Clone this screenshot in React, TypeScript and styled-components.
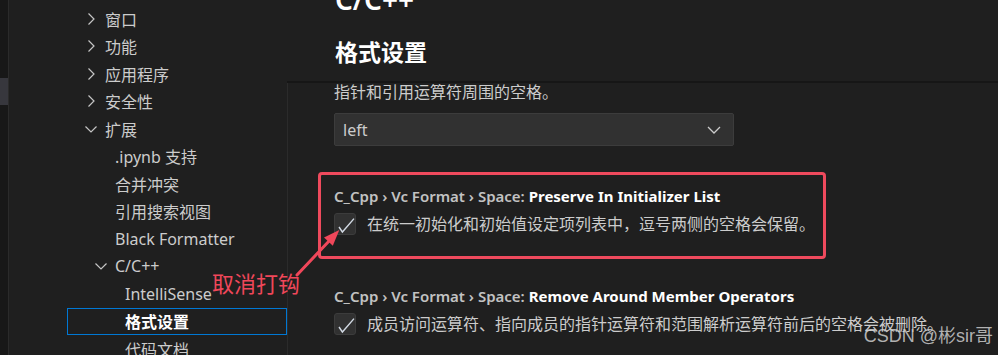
import React from "react";
import styled, { createGlobalStyle } from "styled-components";

const GlobalStyle = createGlobalStyle`
  body {
    margin: 0;
    background: #1f1f1f;
    overflow: hidden;
  }
`;

const UI_FONT = `"Noto Sans", "Noto Sans CJK SC", sans-serif`;

const Frame = styled.div`
  position: relative;
  display: flex;
  width: 998px;
  height: 355px;
  overflow: hidden;
  background: #1f1f1f;
  font-family: ${UI_FONT};
  color: #cccccc;
`;

const ActivityStrip = styled.div`
  width: 8px;
  flex-shrink: 0;
  padding-top: 78px;
  background: #181818;
  border-right: 1px solid #2b2b2b;
`;

const ActiveMark = styled.div`
  height: 27px;
  background: #37373d;
`;

const Sidebar = styled.nav`
  width: 278px;
  flex-shrink: 0;
  padding: 5px 0 0 58px;
  box-sizing: border-box;
`;

const TocRow = styled.div<{ $level: number; $selected?: boolean }>`
  display: flex;
  align-items: center;
  height: 27.5px;
  box-sizing: border-box;
  padding-left: ${(p) => 15 + (p.$level - 1) * 10}px;
  border: 1px solid ${(p) => (p.$selected ? "#0078d4" : "transparent")};
  font-size: 16px;
  white-space: nowrap;
  color: ${(p) => (p.$selected ? "#ffffff" : "#cccccc")};
  font-weight: ${(p) => (p.$selected ? 700 : 400)};
`;

const Twistie = styled.span`
  display: flex;
  align-items: center;
  justify-content: center;
  width: 16px;
  height: 16px;
  margin-right: 6px;
  flex-shrink: 0;
`;

const Editor = styled.main`
  flex: 1;
  display: flex;
  flex-direction: column;
  min-width: 0;
`;

const StickyHeader = styled.header`
  display: flex;
  flex-direction: column;
  align-items: flex-start;
  height: 81px;
  flex-shrink: 0;
  padding-left: 48px;
  box-sizing: border-box;
  overflow: hidden;
`;

const Crumb = styled.div`
  margin-top: -15px;
  font-size: 28px;
  line-height: 28px;
  font-weight: 600;
  color: #ffffff;
`;

const SectionTitle = styled.h2`
  margin: 24px 0 0;
  font-size: 23px;
  line-height: 30px;
  font-weight: 700;
  color: #ffffff;
`;

const HeaderShadow = styled.div`
  height: 2px;
  flex-shrink: 0;
  background: #161616;
`;

const SettingsList = styled.section`
  flex: 1;
  padding-left: 46px;
  border-left: 1px solid #2b2b2b;
`;

const Description = styled.div`
  font-size: 16px;
  line-height: 18px;
  color: #cccccc;
`;

const Select = styled.div`
  display: flex;
  align-items: center;
  justify-content: space-between;
  width: 400px;
  height: 33px;
  margin-top: 12px;
  padding: 0 11px 0 8px;
  box-sizing: border-box;
  background: #313131;
  border: 1px solid #3c3c3c;
  border-radius: 2px;
  font-size: 16px;
  color: #cccccc;
`;

const SettingItem = styled.div<{ $marked?: boolean; $top: number }>`
  position: relative;
  margin-top: ${(p) => p.$top}px;
  padding: 15px 0 35px;

  ${(p) =>
    p.$marked &&
    `
    &::after {
      content: "";
      position: absolute;
      top: 2px;
      left: -16px;
      width: 508px;
      height: 87px;
      box-sizing: border-box;
      border: 3px solid #ef4a5d;
      border-radius: 4px;
      pointer-events: none;
    }
  `}
`;

const SettingTitle = styled.div`
  font-size: 15px;
  line-height: 22px;
  font-weight: 600;
  color: #c2c2c2;
  white-space: nowrap;

  b {
    font-weight: 700;
    color: #ffffff;
  }
`;

const CheckRow = styled.label`
  display: flex;
  align-items: center;
  margin-top: 6px;
  font-size: 16px;
  line-height: 22px;
  color: #cccccc;
  white-space: nowrap;
`;

const CheckBox = styled.span`
  display: flex;
  width: 22px;
  height: 22px;
  margin-right: 11px;
  flex-shrink: 0;
  box-sizing: border-box;
  background: #313131;
  border: 1px solid #3c3c3c;
  border-radius: 3px;
`;

const Callout = styled.div`
  position: absolute;
  left: 212px;
  top: 270px;
  font-size: 22px;
  line-height: 26px;
  color: #f0475a;
  white-space: nowrap;
`;

const CalloutArrow = styled.svg`
  position: absolute;
  left: 290px;
  top: 222px;
`;

const Watermark = styled.div`
  position: absolute;
  right: 5px;
  bottom: 8px;
  font-family: "Liberation Sans", "Noto Sans CJK SC", sans-serif;
  font-size: 18px;
  color: rgba(205, 205, 205, 0.85);
  white-space: nowrap;
`;

const Chevron = ({ open }: { open?: boolean }) => (
  <svg width="16" height="16" viewBox="0 0 16 16" fill="none">
    <polyline
      points={open ? "2.5,5.5 8,11 13.5,5.5" : "5.5,2.5 11,8 5.5,13.5"}
      stroke="#c5c5c5"
      strokeWidth="1.2"
    />
  </svg>
);

const Check = () => (
  <svg width="20" height="20" viewBox="0 0 20 20" fill="none">
    <polyline points="4,13 7.4,18 19,4.6" stroke="#d2dae4" strokeWidth="1.4" />
  </svg>
);

type TocEntry = { label: string; level: number; twistie?: "open" | "closed"; selected?: boolean };

const toc: TocEntry[] = [
  { label: "窗口", level: 1, twistie: "closed" },
  { label: "功能", level: 1, twistie: "closed" },
  { label: "应用程序", level: 1, twistie: "closed" },
  { label: "安全性", level: 1, twistie: "closed" },
  { label: "扩展", level: 1, twistie: "open" },
  { label: ".ipynb 支持", level: 2 },
  { label: "合并冲突", level: 2 },
  { label: "引用搜索视图", level: 2 },
  { label: "Black Formatter", level: 2 },
  { label: "C/C++", level: 2, twistie: "open" },
  { label: "IntelliSense", level: 3 },
  { label: "格式设置", level: 3, selected: true },
  { label: "代码文档", level: 3 },
];

export default function App() {
  return (
    <Frame>
      <GlobalStyle />
      <ActivityStrip>
        <ActiveMark />
      </ActivityStrip>

      <Sidebar>
        {toc.map((item) => (
          <TocRow key={item.label} $level={item.level} $selected={item.selected}>
            <Twistie>{item.twistie && <Chevron open={item.twistie === "open"} />}</Twistie>
            {item.label}
          </TocRow>
        ))}
      </Sidebar>

      <Editor>
        <StickyHeader>
          <Crumb>C/C++</Crumb>
          <SectionTitle>格式设置</SectionTitle>
        </StickyHeader>
        <HeaderShadow />
        <SettingsList>
          <Description>指针和引用运算符周围的空格。</Description>
          <Select>
            left
            <svg width="16" height="16" viewBox="0 0 16 16" fill="none">
              <polyline points="2,5 8,11 14,5" stroke="#cccccc" strokeWidth="1.3" />
            </svg>
          </Select>

          <SettingItem $top={24} $marked>
            <SettingTitle>
              C_Cpp › Vc Format › Space: <b>Preserve In Initializer List</b>
            </SettingTitle>
            <CheckRow>
              <CheckBox>
                <Check />
              </CheckBox>
              在统一初始化和初始值设定项列表中，逗号两侧的空格会保留。
            </CheckRow>
          </SettingItem>

          <SettingItem $top={0}>
            <SettingTitle>
              C_Cpp › Vc Format › Space: <b>Remove Around Member Operators</b>
            </SettingTitle>
            <CheckRow>
              <CheckBox>
                <Check />
              </CheckBox>
              成员访问运算符、指向成员的指针运算符和范围解析运算符前后的空格会被删除。
            </CheckRow>
          </SettingItem>
        </SettingsList>
      </Editor>

      <Callout>取消打钩</Callout>
      <CalloutArrow width="56" height="60" viewBox="0 0 56 60">
        <line x1="7" y1="53" x2="40" y2="18" stroke="#f0475a" strokeWidth="3" strokeLinecap="round" />
        <polygon points="49.3,8 42.8,23.8 34,15.6" fill="#f0475a" />
      </CalloutArrow>

      <Watermark>CSDN @彬sir哥</Watermark>
    </Frame>
  );
}
